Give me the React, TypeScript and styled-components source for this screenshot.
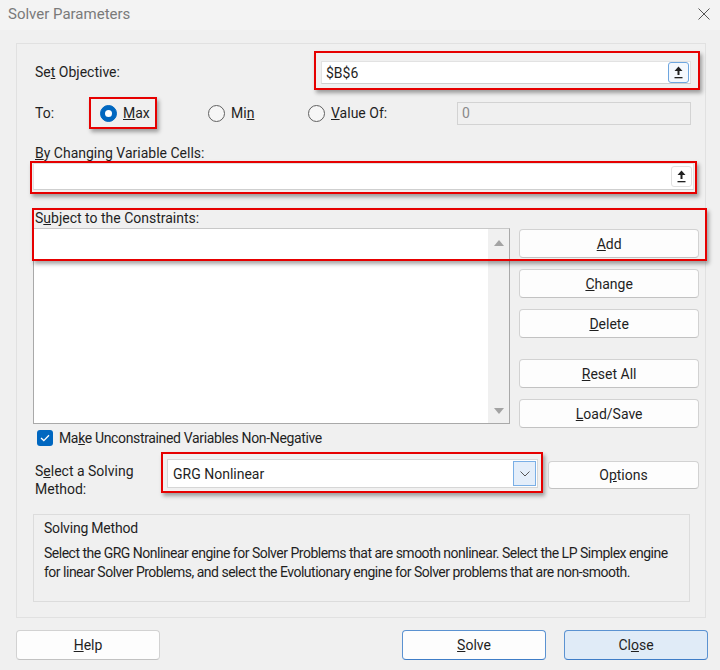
import React from 'react';
import styled, { createGlobalStyle } from 'styled-components';

const GlobalStyle = createGlobalStyle`
  html, body {
    margin: 0;
    padding: 0;
    background: #f0f0f0;
  }
  * {
    box-sizing: border-box;
  }
`;

const Window = styled.div`
  width: 720px;
  height: 670px;
  background: #f0f0f0;
  display: flex;
  flex-direction: column;
  font-family: Roboto, "Liberation Sans", sans-serif;
  font-size: 14px;
  color: #1f1f1f;
  overflow: hidden;
`;

const TitleBar = styled.div`
  height: 30px;
  display: flex;
  align-items: center;
  justify-content: space-between;
  padding: 0 8px 2px 8px;
  background: #f3f3f3;
  color: #7a7a7a;
  font-size: 15px;
`;

const CloseX = styled.span`
  display: flex;
  margin-right: 2px;
`;

const Panel = styled.div`
  margin: 13px 14px 0 16px;
  height: 575px;
  border: 1px solid #e1e1e1;
  padding: 7px 6px 0 16px;
  display: flex;
  flex-direction: column;
`;

const Label = styled.span`
  padding-left: 2px;
  line-height: 18px;
`;

const Highlight = styled.div<{ $pad?: string }>`
  border: 2px solid #e60000;
  padding: ${({ $pad }) => $pad || '0'};
  box-shadow: 2px 3px 4px rgba(0, 0, 0, 0.35);
`;

const ObjectiveRow = styled.div`
  display: flex;
  justify-content: space-between;
  align-items: center;
  height: 39px;
  margin-right: -1px;
  ${Label} {
    padding-top: 3px;
  }
`;

const ObjectiveBox = styled(Highlight)`
  width: 386px;
  height: 39px;
`;

const TextField = styled.div<{ $disabled?: boolean }>`
  display: flex;
  align-items: center;
  height: 23px;
  background: ${({ $disabled }) => ($disabled ? '#f0f0f0' : '#ffffff')};
  border: 1px solid ${({ $disabled }) => ($disabled ? '#d3d3d3' : '#e2e2e2')};
  border-bottom-color: ${({ $disabled }) => ($disabled ? '#d3d3d3' : '#cfcfcf')};
  padding-left: 4px;
  color: ${({ $disabled }) => ($disabled ? '#8a8a8a' : '#1f1f1f')};
`;

const RefButton = styled.span<{ $focused?: boolean }>`
  margin-left: auto;
  margin-right: 1px;
  width: 21px;
  height: 21px;
  display: flex;
  align-items: center;
  justify-content: center;
  background: ${({ $focused }) => ($focused ? '#f4f8fd' : '#ffffff')};
  border: 1px solid ${({ $focused }) => ($focused ? '#6ea6df' : '#e0e0e0')};
  border-radius: 3px;
`;

const ToRow = styled.div`
  display: flex;
  align-items: center;
  margin-top: 7px;
  height: 32px;
`;

const ToLabel = styled(Label)`
  width: 56px;
`;

const MaxBox = styled(Highlight)`
  width: 68px;
  height: 32px;
  display: flex;
  align-items: center;
  padding-left: 9px;
`;

const Option = styled.label<{ $width?: number }>`
  display: flex;
  align-items: center;
  gap: 6px;
  width: ${({ $width }) => ($width ? `${$width}px` : 'auto')};
`;

const Radio = styled.span<{ $checked?: boolean }>`
  width: 17px;
  height: 17px;
  border-radius: 50%;
  flex-shrink: 0;
  display: flex;
  align-items: center;
  justify-content: center;
  background: ${({ $checked }) => ($checked ? '#0067c0' : '#f6f6f6')};
  border: 1px solid ${({ $checked }) => ($checked ? '#0067c0' : '#606060')};
  &::after {
    content: '';
    display: ${({ $checked }) => ($checked ? 'block' : 'none')};
    width: 7px;
    height: 7px;
    border-radius: 50%;
    background: #ffffff;
  }
`;

const Spacer = styled.span<{ $w: number }>`
  width: ${({ $w }) => $w}px;
  flex-shrink: 0;
`;

const ValueField = styled(TextField)`
  width: 234px;
`;

const CellsLabel = styled(Label)`
  margin-top: 16px;
  line-height: 16px;
`;

const CellsBox = styled(Highlight)`
  margin-left: -3px;
  width: 667px;
  height: 33px;
  padding: 0 1px 2px 1px;
  ${TextField} {
    height: 27px;
  }
`;

const ConstraintsSection = styled.div`
  position: relative;
  margin-top: 14px;
`;

const SectionLabel = styled(Label)`
  display: block;
  line-height: 20px;
`;

const ConstraintsMark = styled.div`
  position: absolute;
  top: 0;
  left: -1px;
  width: 675px;
  height: 53px;
  border: 2px solid #e60000;
  box-shadow: 2px 3px 4px rgba(0, 0, 0, 0.35);
  pointer-events: none;
`;

const ConstraintsBody = styled.div`
  display: flex;
  align-items: flex-start;
  gap: 9px;
`;

const ListBox = styled.div`
  width: 478px;
  height: 196px;
  background: #ffffff;
  border: 1px solid #a9a9a9;
  border-top-color: #c8c8c8;
  display: flex;
  justify-content: flex-end;
`;

const ScrollTrack = styled.div`
  width: 21px;
  background: #f0f0f0;
  display: flex;
  flex-direction: column;
  justify-content: space-between;
  align-items: center;
  padding: 11px 0 9px;
`;

const Arrow = styled.span<{ $down?: boolean }>`
  width: 0;
  height: 0;
  border-left: 5px solid transparent;
  border-right: 5px solid transparent;
  ${({ $down }) =>
    $down ? 'border-top: 6px solid #a3a3a3;' : 'border-bottom: 6px solid #a3a3a3;'}
`;

const ButtonColumn = styled.div`
  width: 180px;
  display: flex;
  flex-direction: column;
  gap: 11px;
  padding-top: 1px;
`;

const Button = styled.button<{ $gapTop?: number; $variant?: 'plain' | 'default' | 'focus' }>`
  height: 29px;
  margin-top: ${({ $gapTop }) => ($gapTop ? `${$gapTop}px` : '0')};
  font-family: inherit;
  font-size: 14px;
  color: #1f1f1f;
  border-radius: 4px;
  background: ${({ $variant }) => ($variant === 'focus' ? '#e0ebf7' : '#fdfdfd')};
  border: 1px solid
    ${({ $variant }) => ($variant === 'default' || $variant === 'focus' ? '#5b92d1' : '#d2d2d2')};
  border-bottom-color: ${({ $variant }) =>
    $variant === 'default' || $variant === 'focus' ? '#3f7dc7' : '#c2c2c2'};
  padding: 0;
  cursor: default;
`;

const CheckRow = styled.label`
  display: flex;
  align-items: center;
  gap: 6px;
  margin-top: 2px;
  margin-left: 4px;
  height: 16px;
  letter-spacing: -0.35px;
`;

const CheckBox = styled.span`
  width: 16px;
  height: 16px;
  border-radius: 3px;
  background: #0067c0;
  display: flex;
  align-items: center;
  justify-content: center;
`;

const MethodRow = styled.div`
  display: flex;
  align-items: flex-start;
  height: 41px;
  margin-top: 6px;
`;

const MethodLabel = styled(Label)`
  width: 128px;
  padding-top: 10px;
`;

const MethodBox = styled(Highlight)`
  width: 382px;
  height: 41px;
  padding: 5px 3px 3px 4px;
`;

const Select = styled.div`
  height: 29px;
  background: #ffffff;
  border: 1px solid #d6d6d6;
  display: flex;
  align-items: center;
  padding: 0 1px 0 5px;
`;

const DropButton = styled.span`
  margin-left: auto;
  width: 23px;
  height: 25px;
  display: flex;
  align-items: center;
  justify-content: center;
  background: #e4eefa;
  border: 1px solid #7aafe6;
`;

const OptionsButton = styled(Button)`
  width: 151px;
  margin-left: 5px;
  margin-top: 9px;
  height: 28px;
`;

const GroupBox = styled.div`
  margin-top: 21px;
  width: 657px;
  height: 88px;
  border: 1px solid #dcdcdc;
  padding: 4px 10px 0 10px;
  line-height: 19px;
  letter-spacing: -0.5px;
`;

const GroupTitle = styled.div`
  margin-bottom: 6px;
  letter-spacing: -0.2px;
`;

const Footer = styled.div`
  display: flex;
  align-items: center;
  margin-top: 12px;
  padding: 0 12px 0 16px;
`;

const FooterButton = styled(Button)`
  width: 144px;
  height: 30px;
`;

const Push = styled.span`
  flex: 1;
`;

const RefIcon = () => (
  <svg width="9" height="13" viewBox="0 0 9 13">
    <path d="M4.5 0.5 L8.5 5 L5.5 5 L5.5 9 L3.5 9 L3.5 5 L0.5 5 Z" fill="#202020" />
    <rect x="0.5" y="11" width="8" height="1.3" fill="#202020" />
  </svg>
);

const App: React.FC = () => {
  return (
    <>
      <GlobalStyle />
      <Window>
        <TitleBar>
          <span>Solver Parameters</span>
          <CloseX>
            <svg width="12" height="12" viewBox="0 0 12 12">
              <path d="M0.5 0.5 L11.5 11.5 M11.5 0.5 L0.5 11.5" stroke="#555" strokeWidth="1" />
            </svg>
          </CloseX>
        </TitleBar>

        <Panel>
          <ObjectiveRow>
            <Label>
              Se<u>t</u> Objective:
            </Label>
            <ObjectiveBox $pad="8px 7px 4px 5px">
              <TextField>
                $B$6
                <RefButton $focused>
                  <RefIcon />
                </RefButton>
              </TextField>
            </ObjectiveBox>
          </ObjectiveRow>

          <ToRow>
            <ToLabel>To:</ToLabel>
            <MaxBox>
              <Option>
                <Radio $checked />
                <span>
                  <u>M</u>ax
                </span>
              </Option>
            </MaxBox>
            <Spacer $w={51} />
            <Option $width={100}>
              <Radio />
              <span>
                Mi<u>n</u>
              </span>
            </Option>
            <Option $width={149}>
              <Radio />
              <span>
                <u>V</u>alue Of:
              </span>
            </Option>
            <ValueField $disabled>0</ValueField>
          </ToRow>

          <CellsLabel>
            <u>B</u>y Changing Variable Cells:
          </CellsLabel>
          <CellsBox>
            <TextField>
              <RefButton>
                <RefIcon />
              </RefButton>
            </TextField>
          </CellsBox>

          <ConstraintsSection>
            <SectionLabel>
              S<u>u</u>bject to the Constraints:
            </SectionLabel>
            <ConstraintsBody>
              <ListBox>
                <ScrollTrack>
                  <Arrow />
                  <Arrow $down />
                </ScrollTrack>
              </ListBox>
              <ButtonColumn>
                <Button>
                  <u>A</u>dd
                </Button>
                <Button>
                  <u>C</u>hange
                </Button>
                <Button>
                  <u>D</u>elete
                </Button>
                <Button $gapTop={10}>
                  <u>R</u>eset All
                </Button>
                <Button>
                  <u>L</u>oad/Save
                </Button>
              </ButtonColumn>
            </ConstraintsBody>
            <ConstraintsMark />
          </ConstraintsSection>

          <CheckRow>
            <CheckBox>
              <svg width="10" height="8" viewBox="0 0 10 8">
                <path d="M1 4 L3.8 6.6 L9 1.2" stroke="#fff" strokeWidth="1.3" fill="none" />
              </svg>
            </CheckBox>
            <span>
              Ma<u>k</u>e Unconstrained Variables Non-Negative
            </span>
          </CheckRow>

          <MethodRow>
            <MethodLabel>
              S<u>e</u>lect a Solving
              <br />
              Method:
            </MethodLabel>
            <MethodBox>
              <Select>
                GRG Nonlinear
                <DropButton>
                  <svg width="10" height="6" viewBox="0 0 10 6">
                    <path d="M0.5 0.5 L5 5 L9.5 0.5" stroke="#555" strokeWidth="1" fill="none" />
                  </svg>
                </DropButton>
              </Select>
            </MethodBox>
            <OptionsButton>
              O<u>p</u>tions
            </OptionsButton>
          </MethodRow>

          <GroupBox>
            <GroupTitle>Solving Method</GroupTitle>
            Select the GRG Nonlinear engine for Solver Problems that are smooth nonlinear. Select the LP
            Simplex engine for linear Solver Problems, and select the Evolutionary engine for Solver
            problems that are non-smooth.
          </GroupBox>
        </Panel>

        <Footer>
          <FooterButton>
            <u>H</u>elp
          </FooterButton>
          <Push />
          <FooterButton $variant="default">
            <u>S</u>olve
          </FooterButton>
          <Spacer $w={18} />
          <FooterButton $variant="focus">
            Cl<u>o</u>se
          </FooterButton>
        </Footer>
      </Window>
    </>
  );
};

export default App;
